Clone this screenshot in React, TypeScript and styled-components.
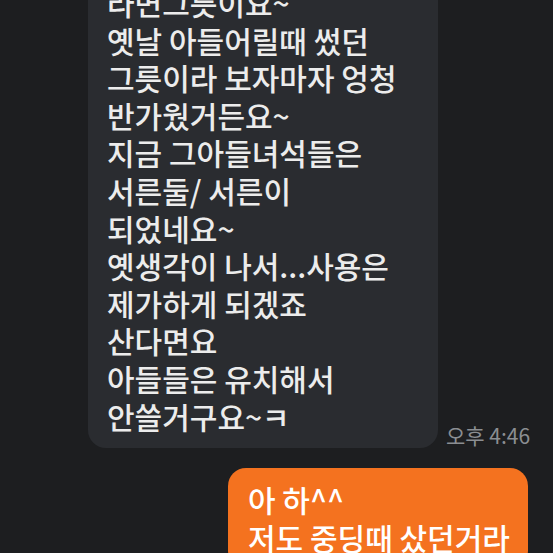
import styled, { createGlobalStyle } from "styled-components"

const Global = createGlobalStyle`
  html, body {
    margin: 0;
    padding: 0;
    background: #1d1e20;
    overflow: hidden;
  }
  body {
    font-family: "Noto Sans CJK KR", "Noto Sans", sans-serif;
  }
`

const Chat = styled.div`
  width: 553px;
  display: flex;
  flex-direction: column;
  gap: 20px;
  padding: 0 25px 0 88px;
  box-sizing: border-box;
  margin-top: -29px;
`

const Row = styled.div<{ $mine?: boolean }>`
  display: flex;
  align-items: flex-end;
  justify-content: ${p => (p.$mine ? "flex-end" : "flex-start")};
  gap: 8px;
`

const Bubble = styled.div<{ $mine?: boolean }>`
  flex: none;
  width: ${p => (p.$mine ? "300px" : "350px")};
  box-sizing: border-box;
  padding: ${p => (p.$mine ? "13px 20px 13px 20px" : "13px 19px 13px 19px")};
  border-radius: 18px;
  background: ${p => (p.$mine ? "#f4721f" : "#2a2c30")};
  color: ${p => (p.$mine ? "#ffffff" : "#ececec")};
  font-size: 30px;
  font-weight: 500;
  line-height: 37.6px;
  white-space: pre;
`

const Time = styled.span`
  font-size: 21px;
  color: #8b8e92;
  line-height: 24px;
  margin-bottom: 1px;
  white-space: nowrap;
`

const received = [
  "라면그릇이요~",
  "옛날 아들어릴때 썼던",
  "그릇이라 보자마자 엉청",
  "반가웠거든요~",
  "지금 그아들녀석들은",
  "서른둘/ 서른이",
  "되었네요~",
  "옛생각이 나서...사용은",
  "제가하게 되겠죠",
  "산다면요",
  "아들들은 유치해서",
  "안쓸거구요~ㅋ",
]

const sent = ["아 하^^", "저도 중딩때 샀던거라"]

export default function App() {
  return (
    <>
      <Global />
      <Chat>
        <Row>
          <Bubble>{received.join("\n")}</Bubble>
          <Time>오후 4:46</Time>
        </Row>
        <Row $mine>
          <Bubble $mine>{sent.join("\n")}</Bubble>
        </Row>
      </Chat>
    </>
  )
}
